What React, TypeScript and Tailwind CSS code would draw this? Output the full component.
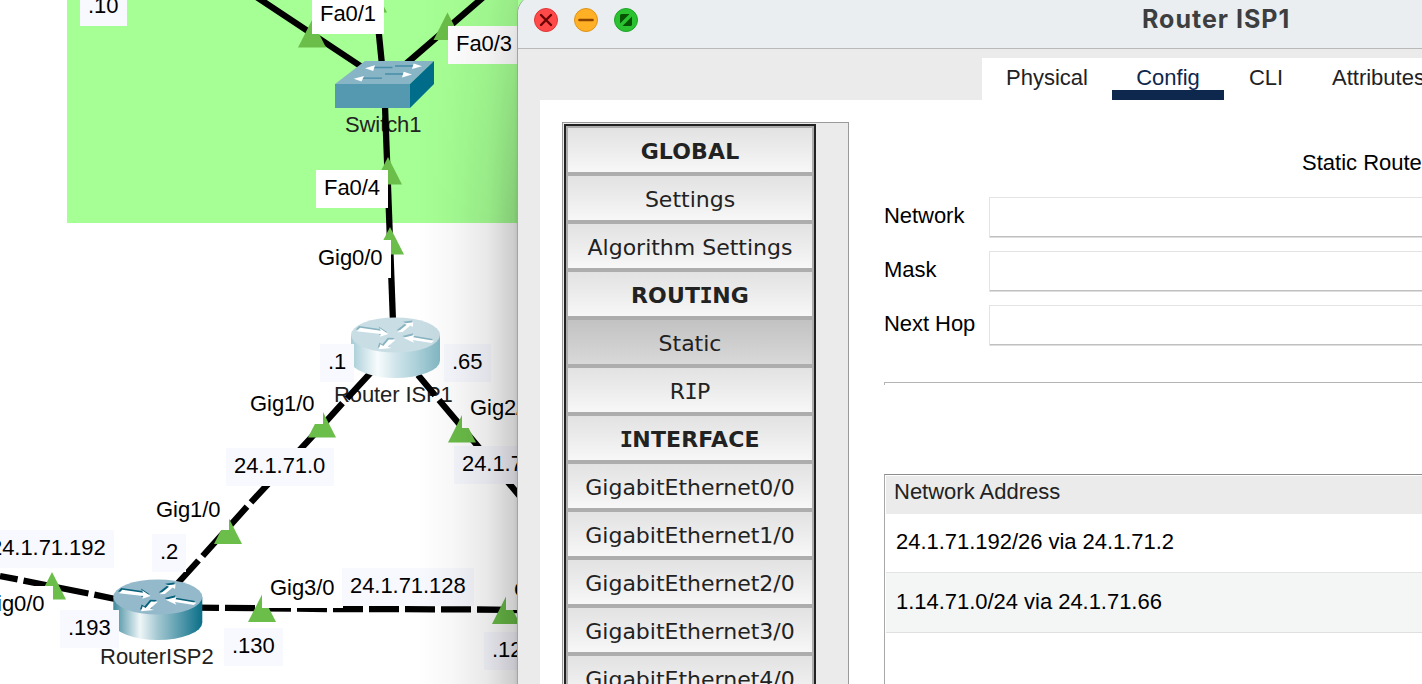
import React from "react";

type LabelProps = { x: number; y: number; w: number; tint?: boolean; children: React.ReactNode };

const labels: { x: number; y: number; w: number; text: string; tint?: boolean }[] = [
  { x: 80, y: -12, w: 47, text: ".10", tint: true },
  { x: 312, y: -4, w: 72, text: "Fa0/1" },
  { x: 448, y: 26, w: 72, text: "Fa0/3" },
  { x: 316, y: 170, w: 72, text: "Fa0/4" },
  { x: 310, y: 240, w: 81, text: "Gig0/0" },
  { x: 320, y: 344, w: 34, text: ".1", tint: true },
  { x: 444, y: 344, w: 47, text: ".65", tint: true },
  { x: 242, y: 386, w: 81, text: "Gig1/0" },
  { x: 462, y: 390, w: 81, text: "Gig2/0" },
  { x: 226, y: 448, w: 108, text: "24.1.71.0", tint: true },
  { x: 454, y: 446, w: 120, text: "24.1.71.64", tint: true },
  { x: 148, y: 492, w: 81, text: "Gig1/0" },
  { x: -18, y: 530, w: 132, text: "24.1.71.192", tint: true },
  { x: 152, y: 534, w: 34, text: ".2", tint: true },
  { x: -28, y: 586, w: 81, text: "Gig0/0" },
  { x: 60, y: 610, w: 59, text: ".193", tint: true },
  { x: 224, y: 628, w: 59, text: ".130", tint: true },
  { x: 262, y: 570, w: 81, text: "Gig3/0" },
  { x: 342, y: 568, w: 132, text: "24.1.71.128", tint: true },
  { x: 506, y: 572, w: 81, text: "Gig1/0" },
  { x: 484, y: 632, w: 59, text: ".129", tint: true },
];

const triangles: [number, number][] = [
  [312, 20], [373, -15], [447.5, 12.5], [388, 157], [390, 227], [322, 410],
  [462, 415], [228, 516.5], [52, 572], [262, 594.5], [506, 596.5],
];

function Label({ x, y, w, tint, children }: LabelProps) {
  return (
    <div
      className={`absolute h-[38px] pl-2 leading-[35px] tracking-[-0.05px] whitespace-nowrap text-black ${tint ? "bg-[#f8f8ff]" : "bg-white"}`}
      style={{ left: x, top: y, width: w }}
    >
      {children}
    </div>
  );
}

const routerArrows =
  "M9 10.2 L29.7 13.2 L28.7 10.8 L37.3 16.5 L29 19.2 L30 16.5 L5.7 13.8 Z M46.3 14.8 L55.7 7.3 L52.8 6 L62.3 4.7 L61.7 9.4 L59.4 8 L51.5 14.4 Z M52.3 20.2 L63.3 17.5 L62.3 19.8 L83 23.2 L80.5 25.5 L61.7 22.5 L63 25.2 Z M27.7 31.8 L29.4 26.8 L32.3 28.5 L37.8 22 L44.6 22.2 L36.6 29.2 L40.6 30.4 Z";

function Router({ x, y, pale }: { x: number; y: number; pale?: boolean }) {
  const id = pale ? "bodyPale" : "bodyDeep";
  return (
    <g transform={`translate(${x} ${y})`}>
      <defs>
        <linearGradient id={id} x1="0" x2="1">
          <stop offset="0" stopColor={pale ? "#a5ccd6" : "#3f8a9d"} />
          <stop offset="0.3" stopColor={pale ? "#f8fcfd" : "#eff6f8"} />
          <stop offset="0.5" stopColor={pale ? "#d0e5eb" : "#a3c7d1"} />
          <stop offset="1" stopColor={pale ? "#83b9c5" : "#0a6f88"} />
        </linearGradient>
      </defs>
      <path d="M0 17.5 V43 A44.5 17.5 0 0 0 89 43 V17.5 Z" fill={`url(#${id})`} />
      <ellipse cx="44.5" cy="17.5" rx="44.5" ry="17.6" fill={pale ? "#c9dde5" : "#94b9ca"} />
      <path d={routerArrows} transform="translate(-1 -1.8)" fill={pale ? "#88b3c0" : "#07617b"} />
      <path d={routerArrows} fill="#fff" />
    </g>
  );
}

function Canvas() {
  return (
    <div className="absolute inset-0 overflow-hidden bg-white">
      <div className="absolute left-[67px] top-0 h-[223px] w-[600px] bg-[#a6ff94]" />
      <div className="absolute left-[345px] top-[107px] leading-[35px] tracking-[-0.1px] text-[#222]">Switch1</div>
      <div className="absolute left-[334px] top-[377px] leading-[35px] tracking-[-0.1px] text-[#222]">Router ISP1</div>
      <div className="absolute left-[100px] top-[639px] leading-[35px] text-[#222]">RouterISP2</div>
      <svg className="absolute inset-0" width="700" height="684">
        <g stroke="#000" strokeWidth="6.3">
          <path d="M252 -6 L368 71 M375 -5 L382.5 70 M487 -6 L400 69" />
          <path d="M385 106 L393 322" />
          <path d="M347 398.4 L374 369.2 M342.5 403.2 L323 424.8 L251 502.3 M247 506.7 L202.7 556 M198.5 560.5 L178 583" />
          <path d="M418 375 L435 395.2 M439 399.9 L458 422.6 L481 450 M502 475 L520 496.5" />
          <path d="M0 576 L17.6 579.4 M23.5 580.6 L53 586.5 L88.4 593.5 M94.3 594.7 L120 600" />
          <path d="M195 607.6 L219 607.9 M225 607.9 L255 608.2 M261 608.3 L291 608.6 M297 608.7 L327 609 M333 609 L363 609.1 M369 609.1 L399 609.2 M405 609.2 L435 609.3 M441 609.3 L471 609.4 M477 609.5 L520 610" />
        </g>
        <g fill="#6bbe49">
          {triangles.map(([x, y]) => (
            <path key={`${x}-${y}`} d={`M${x} ${y} l14 27.5 h-28 Z`} />
          ))}
        </g>
        <Router x={351} y={317.5} pale />
        <Router x={113.3} y={579.5} />
        <path d="M335 84 L365 61 H434 L410 84 Z" fill="#88b5c6" />
        <path d="M335 84 H410 V108 H335 Z" fill="#5499b0" />
        <path d="M410 84 L434 61 V84 L410 108 Z" fill="#006d8a" />
        <path d="M372 67.5 H392.5 M395 66 H416 M385 74 H404 M362 78.2 H382" stroke="#458da8" strokeWidth="1.3" />
        <path d="M365 68.3 L375 65.3 L373.2 71 Z M422 66.2 L413.7 63.5 L412 69 Z M412 74.6 L403.7 71.7 L402 77.5 Z M353.7 78.8 L364 76 L361.5 81.5 Z" fill="#fff" />
      </svg>
      {labels.map((l) => (
        <Label key={`${l.x}-${l.y}`} x={l.x} y={l.y} w={l.w} tint={l.tint}>{l.text}</Label>
      ))}
      <div className="absolute left-[418px] top-0 h-full w-[100px] bg-[linear-gradient(to_right,rgba(0,0,0,0),rgba(0,0,0,0.03)_35%,rgba(0,0,0,0.09)_70%,rgba(0,0,0,0.2)_96%,rgba(0,0,0,0.26))] [mask-image:linear-gradient(to_bottom,rgba(0,0,0,0.4),black_220px)]" />
    </div>
  );
}

const menu = [
  { text: "GLOBAL", head: true },
  { text: "Settings" },
  { text: "Algorithm Settings" },
  { text: "ROUTING", head: true },
  { text: "Static", on: true },
  { text: "RIP" },
  { text: "INTERFACE", head: true },
  { text: "GigabitEthernet0/0" },
  { text: "GigabitEthernet1/0" },
  { text: "GigabitEthernet2/0" },
  { text: "GigabitEthernet3/0" },
  { text: "GigabitEthernet4/0" },
];

/* The sans face has a bare capital I; the mono cut supplies the one with serifs. */
function SerifI({ text }: { text: string }) {
  return (
    <>
      {text.split(/(I)/).map((part, i) =>
        part === "I" ? (
          <span key={i} className="-mx-[0.7px] font-['DejaVu_Sans_Mono',monospace]">I</span>
        ) : (
          part
        ),
      )}
    </>
  );
}

function Sidebar() {
  return (
    <div className="ml-[22px] mt-[22px] flex h-[700px] w-[287px] shrink-0 border border-[#9a9a9a] bg-[#ebebeb]">
      <div className="ml-px mt-px w-[252px] border-2 border-[#222]">
        <div className="border-2 border-y-0 border-[#adadad]">
          {menu.map((m) => (
            <div
              key={m.text}
              className={`flex h-12 items-center justify-center border-y-2 border-[#adadad] pt-1 font-['DejaVu_Sans',sans-serif] text-[22px] leading-[26px] text-[#222] ${
                m.head ? "font-bold tracking-[0.15px]" : ""
              } ${m.on ? "bg-linear-to-b from-[#c2c2c2] to-[#d8d8d8]" : "bg-linear-to-b from-[#e2e2e2] to-[#f7f7f7]"}`}
            >
              <span className="whitespace-nowrap"><SerifI text={m.text} /></span>
            </div>
          ))}
        </div>
      </div>
    </div>
  );
}

function Field({ name }: { name: string }) {
  return (
    <div className="mb-[13px] flex h-[41px]">
      <label className="w-[105px] whitespace-nowrap leading-[37px] tracking-[-0.05px]">{name}</label>
      <div className="flex-1 border border-[#e4e4e4] border-b-0 bg-white">
        <div className="h-[38px]" />
        <div className="h-px bg-[#c0c0c0]" />
        <div className="h-px bg-[#dedede]" />
      </div>
    </div>
  );
}

function RouterWindow() {
  return (
    <div className="absolute left-[517px] top-[-6px] flex h-[720px] w-[1475px] flex-col overflow-hidden rounded-tl-[20px] border border-[#a3a3a3] bg-[#ebebeb]">
      <div className="flex h-[54px] shrink-0 items-center border-b border-[#b9b9b9] bg-[#eaeef1] pb-[2px] pl-4">
        <svg className="-mt-px" width="104" height="24" viewBox="0 0 104 24">
          <circle cx="12" cy="12" r="11.5" fill="#ff4a49" stroke="#df3535" />
          <path d="M7 7 L17 17 M17 7 L7 17" stroke="#6a0505" strokeWidth="2.4" strokeLinecap="round" />
          <circle cx="52" cy="12" r="11.5" fill="#ffb024" stroke="#dd931b" />
          <path d="M45.5 12 H58.5" stroke="#8c4300" strokeWidth="2.6" strokeLinecap="round" />
          <circle cx="92" cy="12" r="11.5" fill="#2ac231" stroke="#1fa327" />
          <path d="M86 15.5 V7.5 Q86 6 87.5 6 H95.5 Z M98 8.5 V16.5 Q98 18 96.5 18 H88.5 Z" fill="#075203" />
        </svg>
        <div className="-mt-[2px] ml-[504px] whitespace-nowrap font-['Inter',sans-serif] text-[25px] font-bold tracking-[1px] text-[#3d3e3f]">Router ISP1</div>
      </div>
      <div className="flex h-[51px] shrink-0 items-end pl-[464px]">
        <div className="flex h-[42px] bg-white leading-[39px] text-[#222]">
          <div className="w-[130px] text-center">Physical</div>
          <div className="w-28 border-b-10 border-[#0e274c] text-center text-[#0e274c]">Config</div>
          <div className="w-[84px] text-center">CLI</div>
          <div className="w-[400px] pl-6">Attributes</div>
        </div>
      </div>
      <div className="ml-[22px] flex flex-1 bg-white">
        <Sidebar />
        <div className="ml-[35px] flex flex-1 flex-col pt-[43px] text-black">
          <div className="mb-[15px] pl-[418px] leading-[39px]">Static Routes</div>
          <Field name="Network" />
          <Field name="Mask" />
          <Field name="Next Hop" />
          <div className="mt-[23px] h-[3px] border-l border-t border-[#b5b5b5]" />
          <div className="mt-[89px] flex-1 border-l border-t border-[#a8a8a8] border-t-[#8c8c8c] pl-px pt-px">
            <div className="h-[38px] bg-[#ebebeb] pl-2 leading-[32px] text-[#222]">Network Address</div>
            <div className="h-[59px] border-b border-[#e4e4e4] pl-[10px] leading-[55px] tracking-[-0.03px]">24.1.71.192/26 via 24.1.71.2</div>
            <div className="h-[60px] border-b border-[#e0e0e0] bg-[#f4f5f5] pl-[10px] leading-[57px] tracking-[-0.03px]">1.14.71.0/24 via 24.1.71.66</div>
          </div>
        </div>
      </div>
    </div>
  );
}

export default function App() {
  return (
    <main className="relative h-[684px] w-[1422px] overflow-hidden font-['Liberation_Sans',Arial,sans-serif] text-[22px]">
      <Canvas />
      <RouterWindow />
    </main>
  );
}
